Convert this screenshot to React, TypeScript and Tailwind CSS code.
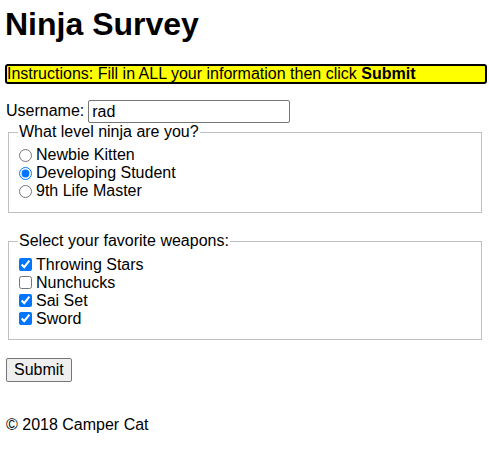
import React from 'react';

const levels = [
  { id: 'newbie', label: 'Newbie Kitten', checked: false },
  { id: 'student', label: 'Developing Student', checked: true },
  { id: 'master', label: '9th Life Master', checked: false },
];

const weapons = [
  { id: 'stars', label: 'Throwing Stars', checked: true },
  { id: 'nunchucks', label: 'Nunchucks', checked: false },
  { id: 'sai', label: 'Sai Set', checked: true },
  { id: 'sword', label: 'Sword', checked: true },
];

export default function App() {
  return (
    <div className="min-h-[449px] bg-white px-[6px] pt-[6px] text-[16px] leading-[18.4px] text-black font-['Liberation_Sans',Arial,sans-serif]">
      <h1 className="-ml-px text-[32px] font-bold leading-[37px] mb-[21px]">Ninja Survey</h1>

      <div className="-ml-px w-[482px] h-[20px] border-2 border-black rounded-[3px] bg-[#ffff00] leading-[16px]">
        Instructions: Fill in ALL your information then click <strong className="font-bold">Submit</strong>
      </div>

      <form className="mt-[16px]" onSubmit={(e) => e.preventDefault()}>
        <div className="flex items-center h-[23px]">
          <label htmlFor="username">Username:</label>
          <input
            id="username"
            type="text"
            defaultValue="rad"
            className="ml-[4px] w-[202px] h-[23px] border border-[#767676] rounded-[2px] px-[3px] bg-white text-[16px]"
          />
        </div>

        <fieldset className="ml-[2px] mr-px border border-[#c0c0c0] pl-[9px] pt-[5px] pb-[12px]">
          <legend className="px-px">What level ninja are you?</legend>
          {levels.map((l) => (
            <div key={l.id} className="flex items-center h-[18px]">
              <input
                type="radio"
                name="level"
                id={l.id}
                defaultChecked={l.checked}
                className="ml-px mr-[4px] w-[13px] h-[13px]"
              />
              <label htmlFor={l.id}>{l.label}</label>
            </div>
          ))}
        </fieldset>

        <fieldset className="mt-[19px] ml-[2px] mr-px border border-[#c0c0c0] pl-[9px] pt-[5px] pb-[11px]">
          <legend className="px-px">Select your favorite weapons:</legend>
          {weapons.map((w) => (
            <div key={w.id} className="flex items-center h-[18px]">
              <input
                type="checkbox"
                id={w.id}
                defaultChecked={w.checked}
                className="ml-px mr-[4px] w-[13px] h-[13px]"
              />
              <label htmlFor={w.id}>{w.label}</label>
            </div>
          ))}
        </fieldset>

        <button
          type="submit"
          className="mt-[18px] h-[24px] px-[7px] border border-[#767676] rounded-[2px] bg-[#efefef] text-black"
        >
          Submit
        </button>
      </form>

      <footer className="mt-[34px]">
        <p>© 2018 Camper Cat</p>
      </footer>
    </div>
  );
}
